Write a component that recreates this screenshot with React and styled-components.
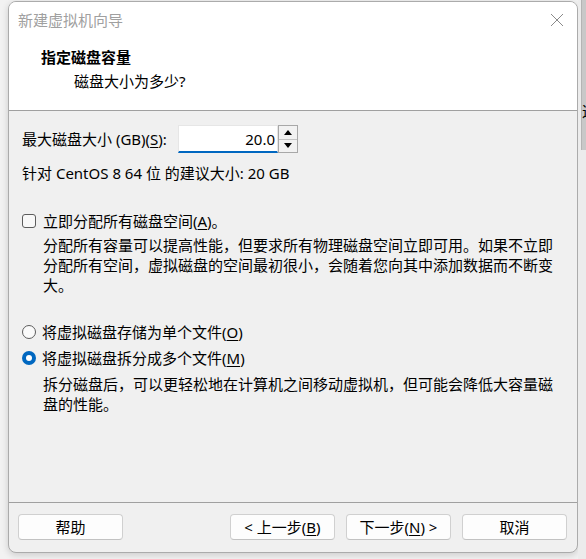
import React from 'react';
import styled, { createGlobalStyle } from 'styled-components';

const GlobalStyle = createGlobalStyle`
  html, body {
    margin: 0;
    padding: 0;
  }
  body {
    background: #f2f2f2;
    font-family: "Noto Sans", "Noto Sans CJK SC", sans-serif;
    font-size: 15px;
    color: #000;
  }
`;

const Page = styled.div`
  display: flex;
  align-items: flex-start;
  width: 586px;
  height: 559px;
  padding-left: 8px;
  box-sizing: border-box;
  overflow: hidden;
`;

const Window = styled.div`
  flex-shrink: 0;
  width: 570px;
  height: 552px;
  margin-top: 1px;
  box-sizing: border-box;
  border: 1px solid #ababab;
  border-radius: 8px;
  overflow: hidden;
  display: flex;
  flex-direction: column;
  background: #f0f0f0;
  box-shadow: 0 2px 7px rgba(0, 0, 0, 0.16);
`;

const TitleBar = styled.div`
  height: 36px;
  display: flex;
  align-items: center;
  justify-content: space-between;
  padding: 0 13px 0 9px;
  background: #fff;
  color: #a0a0a0;
  line-height: 20px;
`;

const Header = styled.div`
  background: #fff;
  padding: 9px 0 19px 32px;
  border-bottom: 1px solid #a0a0a0;
  line-height: 20px;
`;

const HeaderTitle = styled.div`
  font-weight: bold;
`;

const HeaderSub = styled.div`
  margin-top: 4px;
  padding-left: 33px;
`;

const Body = styled.div`
  flex: 1;
  padding: 14px 12px 0 13px;
  border-bottom: 1px solid #a0a0a0;
  line-height: 20px;
`;

const SizeRow = styled.div`
  display: flex;
  align-items: center;
  height: 28px;
`;

const Label = styled.span`
  width: 156px;
  white-space: nowrap;
`;

const NumberBox = styled.div`
  width: 100px;
  height: 28px;
  box-sizing: border-box;
  background: #fff;
  border: 1px solid #e6e6e6;
  border-bottom: 2px solid #0067c0;
  text-align: right;
  padding: 3px 2px 0 0;
`;

const Spinner = styled.div`
  width: 20px;
  height: 28px;
  box-sizing: border-box;
  border: 1px solid #a8a8a8;
  display: flex;
  flex-direction: column;
  background: #f0f0f0;
`;

const SpinButton = styled.div`
  flex: 1;
  display: flex;
  align-items: center;
  justify-content: center;
  background: #f2f2f2;
  border-top: ${(p) => (p.$down ? '1px solid #c4c4c4' : 'none')};
`;

const Line = styled.div`
  margin-top: ${(p) => p.$gap || 0}px;
`;

const OptionRow = styled.label`
  display: flex;
  align-items: center;
  gap: ${(p) => p.$gap || 7}px;
  margin-top: ${(p) => p.$top || 0}px;
  height: 20px;
`;

const Check = styled.span`
  width: 14px;
  height: 14px;
  box-sizing: border-box;
  border: 1px solid #5c5c5c;
  border-radius: 3px;
  background: #f8f8f8;
`;

const Radio = styled.span`
  width: 14px;
  height: 14px;
  box-sizing: border-box;
  border-radius: 50%;
  display: flex;
  align-items: center;
  justify-content: center;
  border: ${(p) => (p.$on ? 'none' : '1px solid #5c5c5c')};
  background: ${(p) => (p.$on ? '#0067c0' : '#fafafa')};

  &::after {
    content: '';
    display: ${(p) => (p.$on ? 'block' : 'none')};
    width: 6px;
    height: 6px;
    border-radius: 50%;
    background: #fff;
  }
`;

const Note = styled.p`
  margin: ${(p) => p.$top || 0}px 0 0 21px;
  width: 515px;
  line-height: 20px;
`;

const Key = styled.span`
  text-decoration: underline;
  text-underline-offset: 2px;
`;

const Footer = styled.div`
  height: 49px;
  box-sizing: border-box;
  padding: 11px 10px 0 9px;
  display: flex;
  justify-content: space-between;
  align-items: flex-start;
`;

const ButtonGroup = styled.div`
  display: flex;
  gap: 11px;
`;

const Button = styled.button`
  width: ${(p) => p.$w || 105}px;
  height: 26px;
  box-sizing: border-box;
  background: #fdfdfd;
  border: 1px solid #d0d0d0;
  border-bottom-color: #c2c2c2;
  border-radius: 4px;
  font-family: inherit;
  font-size: 15px;
  color: #000;
  padding: 0;
  line-height: 22px;
`;

const Strip = styled.div`
  flex-shrink: 0;
  align-self: stretch;
  width: 8px;
  padding-left: 3px;
  box-sizing: border-box;
  background: #ececec;
`;

const StripTop = styled.div`
  height: 150px;
  overflow: hidden;
  background: #c8c8c8;
  border-left: 1px solid #b4b4b4;
  padding-top: 101px;
  box-sizing: border-box;
  line-height: 20px;
  white-space: nowrap;
`;

const CloseIcon = () => (
  <svg width="14" height="14" viewBox="0 0 14 14">
    <path d="M1 1 L13 13 M13 1 L1 13" stroke="#8a8a8a" strokeWidth="1" fill="none" />
  </svg>
);

const Arrow = ({ down }) => (
  <svg width="8" height="5" viewBox="0 0 8 5">
    <polygon points={down ? '0,0 8,0 4,5' : '0,5 8,5 4,0'} fill="#000" />
  </svg>
);

export default function App() {
  return (
    <>
      <GlobalStyle />
      <Page>
        <Window>
          <TitleBar>
            <span>新建虚拟机向导</span>
            <CloseIcon />
          </TitleBar>
          <Header>
            <HeaderTitle>指定磁盘容量</HeaderTitle>
            <HeaderSub>磁盘大小为多少?</HeaderSub>
          </Header>
          <Body>
            <SizeRow>
              <Label>
                最大磁盘大小 (GB)(<Key>S</Key>):
              </Label>
              <NumberBox>20.0</NumberBox>
              <Spinner>
                <SpinButton>
                  <Arrow />
                </SpinButton>
                <SpinButton $down>
                  <Arrow down />
                </SpinButton>
              </Spinner>
            </SizeRow>
            <Line $gap={10}>针对 CentOS 8 64 位 的建议大小: 20 GB</Line>

            <OptionRow $top={28}>
              <Check />
              <span>
                立即分配所有磁盘空间(<Key>A</Key>)。
              </span>
            </OptionRow>
            <Note $top={4}>
              分配所有容量可以提高性能，但要求所有物理磁盘空间立即可用。如果不立即分配所有空间，虚拟磁盘的空间最初很小，会随着您向其中添加数据而不断变大。
            </Note>

            <OptionRow $top={27} $gap={6}>
              <Radio />
              <span>
                将虚拟磁盘存储为单个文件(<Key>O</Key>)
              </span>
            </OptionRow>
            <OptionRow $top={6} $gap={6}>
              <Radio $on />
              <span>
                将虚拟磁盘拆分成多个文件(<Key>M</Key>)
              </span>
            </OptionRow>
            <Note $top={6}>
              拆分磁盘后，可以更轻松地在计算机之间移动虚拟机，但可能会降低大容量磁盘的性能。
            </Note>
          </Body>
          <Footer>
            <Button>帮助</Button>
            <ButtonGroup>
              <Button>
                &lt; 上一步(<Key>B</Key>)
              </Button>
              <Button>
                下一步(<Key>N</Key>) &gt;
              </Button>
              <Button>取消</Button>
            </ButtonGroup>
          </Footer>
        </Window>
        <Strip>
          <StripTop>这</StripTop>
        </Strip>
      </Page>
    </>
  );
}
